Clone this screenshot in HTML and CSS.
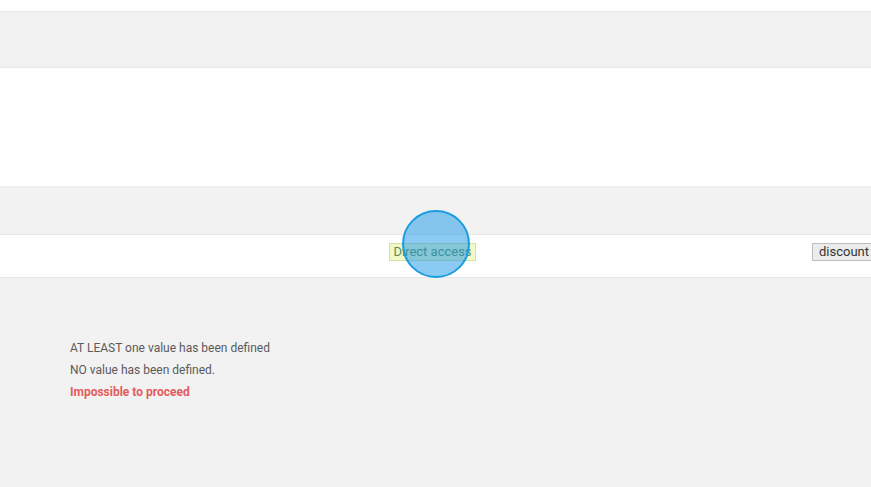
FILE: index.html
```html
<!DOCTYPE html>
<html lang="en">
<head>
  <meta charset="UTF-8">
  <title>Direct access</title>
  <link rel="stylesheet" href="styles.css">
</head>
<body>
  <div class="page">
    <div class="top-gap"></div>
    <div class="band band-top"></div>
    <div class="panel"></div>
    <div class="band band-mid"></div>
    <div class="access-row">
      <span class="access-badge">Direct access</span>
      <button class="discount-btn">discount %</button>
      <div class="touch-dot"></div>
    </div>
    <div class="footer">
      <div class="msg">AT LEAST one value has been defined</div>
      <div class="msg">NO value has been defined.</div>
      <div class="msg msg-error">Impossible to proceed</div>
    </div>
  </div>
</body>
</html>
```

FILE: styles.css
```css
html, body {
  margin: 0;
  height: 100%;
}
body {
  background: #fff;
  font-family: Roboto, "Liberation Sans", sans-serif;
  color: #555;
  overflow: hidden;
}
.page {
  display: flex;
  flex-direction: column;
  height: 100%;
}
.top-gap { height: 11px; flex: 0 0 auto; }
.band {
  background: #f2f2f2;
  box-sizing: border-box;
  border-top: 1px solid #e8e8e8;
  border-bottom: 1px solid #e6e6e6;
  flex: 0 0 auto;
}
.band-top { height: 57px; box-shadow: inset 0 -4px 0 #f0f0f0; }
.panel { height: 118px; flex: 0 0 auto; }
.band-mid { height: 49px; border-top-color: #ececec; }
.access-row {
  position: relative;
  height: 43px;
  box-sizing: border-box;
  border-bottom: 1px solid #e6e6e6;
  display: flex;
  align-items: center;
  padding: 0 0 0 389px;
  white-space: nowrap;
  flex: 0 0 auto;
}
.access-badge {
  flex: 0 0 auto;
  box-sizing: border-box;
  width: 87px;
  height: 18px;
  line-height: 16px;
  text-align: center;
  font-size: 13px;
  color: #5f8a5c;
  background: #f2f8c6;
  border: 1px solid #d5ddaa;
  margin-top: -8px;
}
.discount-btn {
  flex: 0 0 auto;
  margin: -8px 0 0 336px;
  height: 18px;
  padding: 0 6px;
  font-family: inherit;
  font-size: 13px;
  line-height: 16px;
  color: #333;
  background: #ececec;
  border: 1px solid #bdbdbd;
  border-radius: 0;
}
.touch-dot {
  position: absolute;
  left: 402px;
  top: -25px;
  width: 64px;
  height: 64px;
  border-radius: 50%;
  border: 2px solid #1a9de0;
  background: rgba(24, 150, 230, 0.5);
}
.footer {
  flex: 1 1 auto;
  background: #f2f2f2;
  padding: 59px 0 0 70px;
  font-size: 12px;
  line-height: 22px;
  color: #5a5a5a;
}
.msg-error {
  color: #e55c5c;
  font-weight: bold;
}
```
